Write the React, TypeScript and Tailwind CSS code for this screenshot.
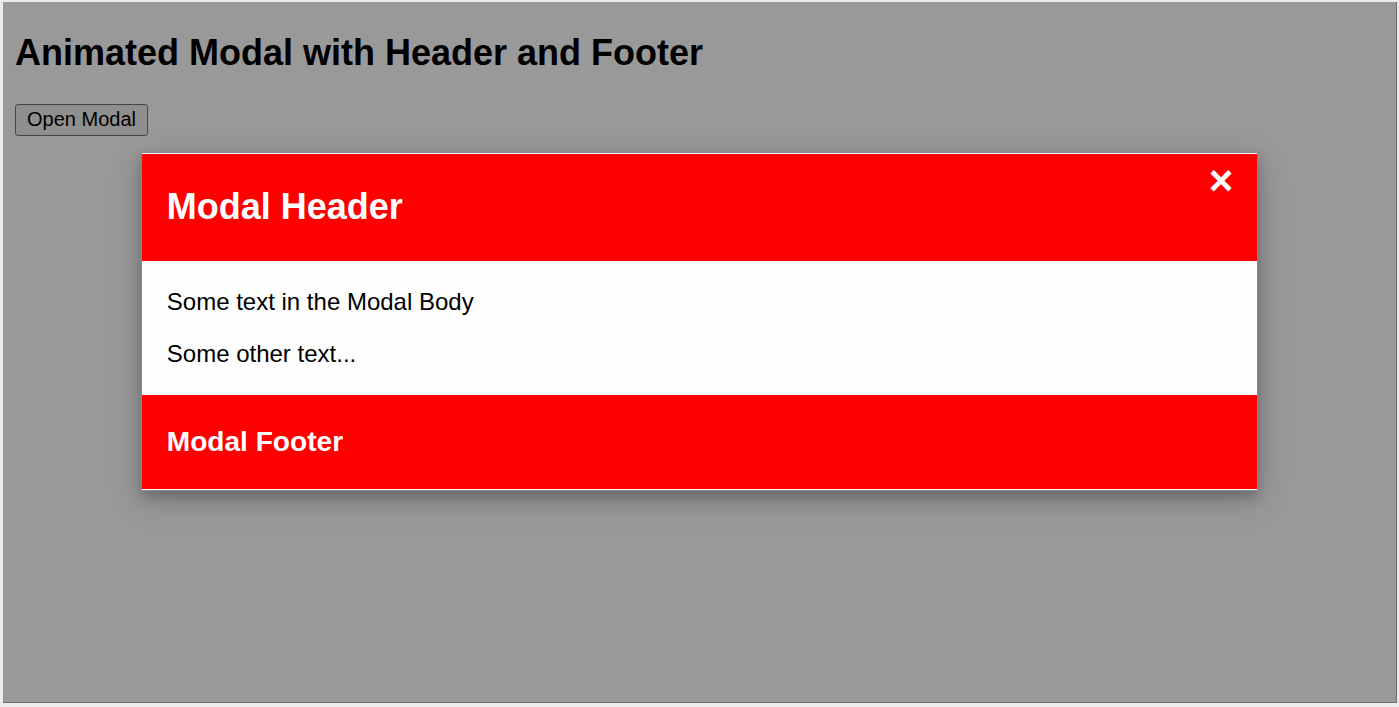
import React, { useState } from 'react';

const App = () => {
    const [open, setOpen] = useState(true);

    return (
        <div className="w-[1399px] h-[707px] bg-[#ececec] pt-[2px] pl-[3px] font-['Liberation_Sans',Arial,Helvetica,sans-serif] text-black overflow-hidden">
            {/* Page */}
            <div className="relative w-[1394px] h-[701px] bg-white border-r border-b border-[#6e6e6e]">
                <div className="flex flex-col items-start px-[12px]">
                    <h2 className="text-[36px] font-bold leading-[normal] mt-[29.88px] mb-[29.88px]">
                        Animated Modal with Header and Footer
                    </h2>
                    <button
                        onClick={() => setOpen(true)}
                        className="text-[20px] leading-[normal] px-[11px] pt-[3px] pb-[4px] bg-[#efefef] border border-[#767676] rounded-[3px]"
                    >
                        Open Modal
                    </button>
                </div>

                {/* Modal */}
                {open && (
                    <div className="absolute inset-0 bg-black/40 pt-[150px]">
                        <div className="w-[calc(80%+3px)] mx-auto bg-[#fefefe] border border-[#888] py-px shadow-[0_6px_12px_0_rgba(0,0,0,0.2),0_9px_30px_0_rgba(0,0,0,0.19)]">
                            {/* Header */}
                            <div className="flex items-start justify-between bg-[#ff0000] text-white pl-[25px] pr-[24px] py-[3px]">
                                <h2 className="text-[36px] font-bold leading-[normal] my-[29.4px]">Modal Header</h2>
                                <span
                                    onClick={() => setOpen(false)}
                                    className="text-[42px] font-bold leading-[normal] cursor-pointer"
                                >
                                    ×
                                </span>
                            </div>

                            {/* Body */}
                            <div className="bg-[#fefefe] pl-[25px] pr-[24px] py-[3px] text-[24px] leading-[normal]">
                                <p className="my-[24px]">Some text in the Modal Body</p>
                                <p className="my-[24px]">Some other text...</p>
                            </div>

                            {/* Footer */}
                            <div className="bg-[#ff0000] text-white pl-[25px] pr-[24px] py-[3px]">
                                <h3 className="text-[28.08px] font-bold leading-[normal] my-[28.08px]">Modal Footer</h3>
                            </div>
                        </div>
                    </div>
                )}
            </div>
        </div>
    );
};

export default App;
